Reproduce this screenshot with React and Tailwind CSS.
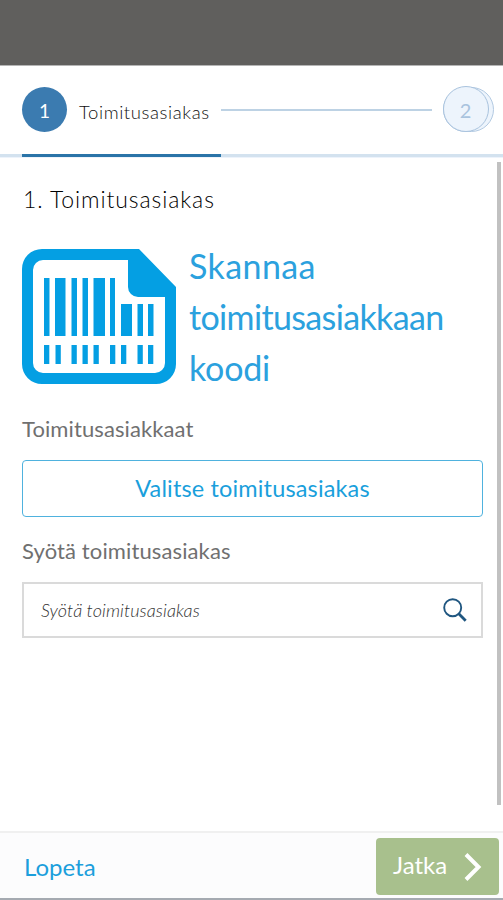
const BARS = [
    { x: 22, w: 5.5, h: 58, top: 29 },
    { x: 33, w: 10.5, h: 58, top: 29 },
    { x: 49.5, w: 5.5, h: 58, top: 29 },
    { x: 60.5, w: 5.5, h: 58, top: 29 },
    { x: 71.5, w: 11.5, h: 58, top: 29 },
    { x: 88, w: 5, h: 58, top: 29 },
    { x: 99, w: 11, h: 32, top: 55 },
    { x: 115.5, w: 5.5, h: 32, top: 55 },
    { x: 126, w: 5.5, h: 32, top: 55 },
];

const TICKS = [22, 33.5, 49.5, 60.5, 71.5, 88, 99, 115.5, 126];

const BarcodeIcon = () => (
    <svg width="154" height="135" viewBox="0 0 154 135" className="shrink-0" fill="#049fe3">
        <path
            fillRule="evenodd"
            d="M20 0H117L154 38V115A20 20 0 0 1 134 135H20A20 20 0 0 1 0 115V20A20 20 0 0 1 20 0ZM21 11A10 10 0 0 0 11 21V114A10 10 0 0 0 21 124H133A10 10 0 0 0 143 114V48H116A10 10 0 0 1 106 38V11Z"
        />
        {BARS.map((bar) => (
            <rect key={bar.x} x={bar.x} y={bar.top} width={bar.w} height={bar.h} />
        ))}
        {TICKS.map((x) => (
            <rect key={x} x={x} y="96" width="5.3" height="19" />
        ))}
    </svg>
);

const SearchIcon = () => (
    <svg width="24" height="24" viewBox="0 0 24 24" fill="none" stroke="#1f5680">
        <circle cx="9.7" cy="9.7" r="8.5" strokeWidth="1.9" />
        <path d="M15.8 15.8L22.7 22.7" strokeWidth="2.8" />
    </svg>
);

const Stepper = () => (
    <nav className="h-[93px] shrink-0 border-t border-[#b5b5b5] bg-white flex flex-col">
        <div className="h-[88px] shrink-0 pt-[20.5px] pl-[22px] pr-[9px] flex items-start">
            <div className="size-[45px] shrink-0 rounded-full bg-[#3b7bb0] text-white text-[19px] leading-[48px] text-center">
                1
            </div>
            <span className="ml-[12px] w-[130px] whitespace-nowrap text-[18.5px] leading-[50px] tracking-[0.6px] font-light text-[#111]">
                Toimitusasiakas
            </span>
            <div className="ml-[12px] mr-[11px] mt-[22px] h-[2px] flex-1 bg-[#bdd2e4]" />
            <div className="w-[51px] shrink-0 rounded-full border-[1.5px] border-[#b3cae2] bg-[#edf4fc]">
                <div className="-m-[1.5px] size-[46px] rounded-full border-[1.5px] border-[#a9c3de] bg-[#edf4fc] text-center text-[20px] leading-[47px] text-[#a9c3de]">
                    2
                </div>
            </div>
        </div>
        <div className="h-[4px] shrink-0 border-b border-[#edf3fb] bg-[#d3e2ef] pl-[22px]">
            <div className="h-[3px] w-[199px] bg-[#2a74a8]" />
        </div>
    </nav>
);

const App = () => {
    return (
        <div className="flex h-[900px] w-[503px] flex-col overflow-hidden bg-white font-[Lato,sans-serif]">
            <div className="h-[65px] shrink-0 bg-[#605f5d]" />
            <Stepper />

            <div className="flex min-h-0 flex-1">
                <main className="w-[497px] shrink-0 pl-[22px] pr-[14px]">
                    <h1 className="ml-[1px] mt-[25px] text-[23px] leading-[32px] tracking-[0.9px] font-light text-black">
                        1. Toimitusasiakas
                    </h1>

                    <div className="mt-[34px] flex h-[135px] items-center gap-[13px]">
                        <BarcodeIcon />
                        <p className="flex flex-col whitespace-nowrap text-[34px] leading-[51px] text-[#2ba1de]">
                            <span className="tracking-[0.4px]">Skannaa</span>
                            <span className="tracking-[-0.65px]">toimitusasiakkaan</span>
                            <span className="tracking-[-0.2px]">koodi</span>
                        </p>
                    </div>

                    <h2 className="mt-[29px] text-[22px] leading-[32px] tracking-[0.1px] text-[#707070]">Toimitusasiakkaat</h2>
                    <button className="mt-[15px] block h-[57px] w-[461px] rounded-[4px] border-[1.5px] border-[#4fb2de] text-[23.5px] tracking-[0.15px] text-[#1a9fdc]">
                        Valitse toimitusasiakas
                    </button>

                    <label className="mt-[18px] block text-[22px] leading-[32px] tracking-[0.12px] text-[#707070]">Syötä toimitusasiakas</label>
                    <div className="mt-[15px] flex h-[56px] w-[461px] items-center justify-between border-2 border-[#dadada] pl-[17px] pr-[14px]">
                        <span className="text-[18px] italic font-light tracking-[0.1px] text-[#333]">Syötä toimitusasiakas</span>
                        <SearchIcon />
                    </div>
                </main>
                <div className="mt-[4px] h-[643px] w-[4px] bg-[#c1c1c1]" />
            </div>

            <footer className="flex h-[69px] shrink-0 items-start justify-between border-t-2 border-b-2 border-t-[#f0f0f0] border-b-[#a5aab1] bg-[#fcfcfd] pl-[24px] pr-[4px]">
                <button className="mt-[16px] text-[24px] leading-[36px] text-[#1c9fdc]">Lopeta</button>
                <button className="mt-[5px] flex h-[57px] w-[123px] items-center justify-between rounded-[4px] bg-[#a8c08d] pl-[17px] pr-[17px] text-[24px] text-white">
                    <span className="-mt-[3px]">Jatka</span>
                    <svg width="18" height="28" viewBox="0 0 18 28" fill="none" stroke="white" strokeWidth="4">
                        <path d="M2 1.5L14.5 14L2 26.5" />
                    </svg>
                </button>
            </footer>
        </div>
    );
};

export default App;
